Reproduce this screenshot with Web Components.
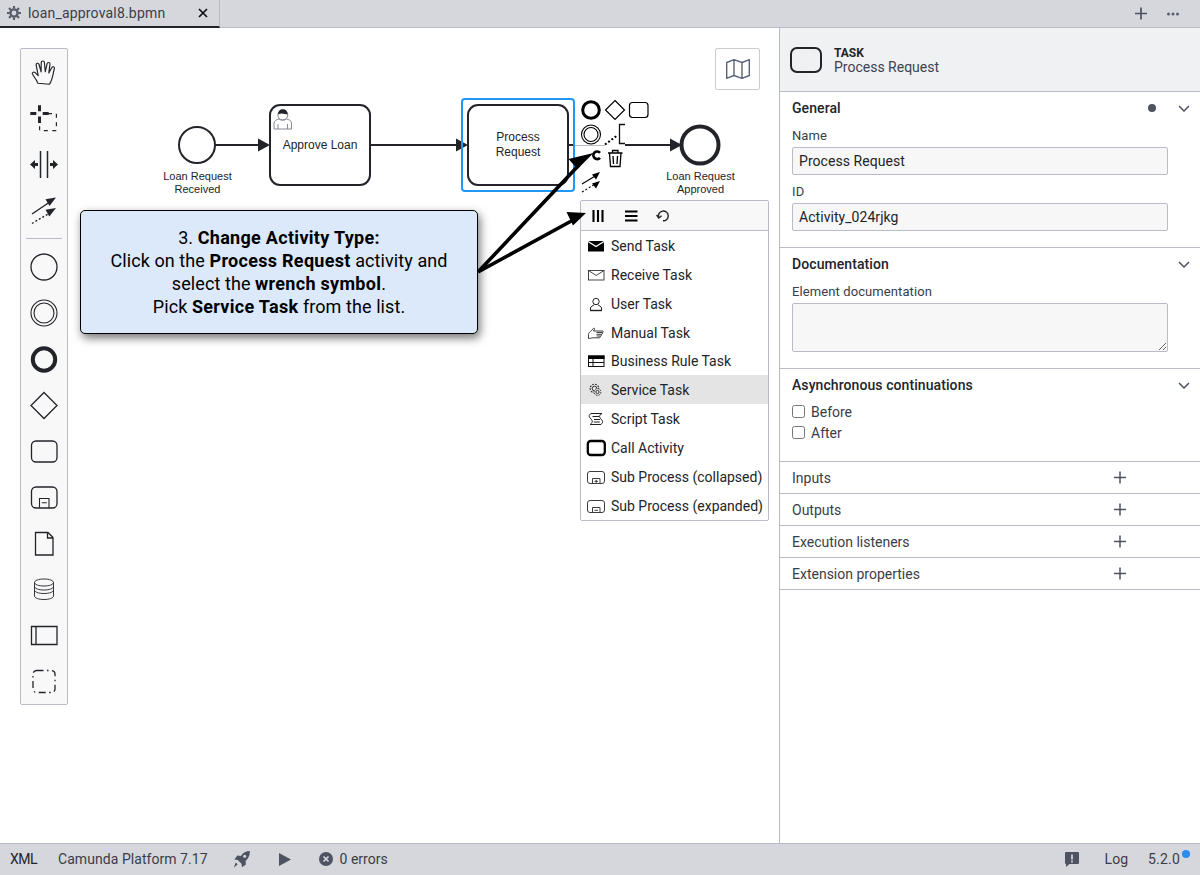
<!DOCTYPE html>
<html lang="en">
<head>
<meta charset="utf-8">
<title>loan_approval8.bpmn</title>
<style>
html,body{margin:0;padding:0;height:100%;overflow:hidden}
body{font-family:"Roboto","Liberation Sans",sans-serif;font-size:14px;color:#22242a;background:#fff}
</style>
</head>
<body>
<app-shell>
  <tab-bar slot="top"></tab-bar>
  <bpmn-canvas slot="main">
    <tool-palette></tool-palette>
    <map-toggle></map-toggle>
    <bpmn-diagram></bpmn-diagram>
    <call-out>
      3. <b>Change Activity Type:</b><br>
      Click on the <b>Process Request</b> activity and<br>
      select the <b>wrench symbol</b>.<br>
      Pick <b>Service Task</b> from the list.
    </call-out>
    <replace-menu>
      <menu-item icon="send">Send Task</menu-item>
      <menu-item icon="receive">Receive Task</menu-item>
      <menu-item icon="user">User Task</menu-item>
      <menu-item icon="manual">Manual Task</menu-item>
      <menu-item icon="rule" short>Business Rule Task</menu-item>
      <menu-item icon="service" active>Service Task</menu-item>
      <menu-item icon="script">Script Task</menu-item>
      <menu-item icon="call">Call Activity</menu-item>
      <menu-item icon="subc">Sub Process (collapsed)</menu-item>
      <menu-item icon="sube">Sub Process (expanded)</menu-item>
    </replace-menu>
    <pointer-arrows></pointer-arrows>
  </bpmn-canvas>
  <properties-panel slot="side">
    <panel-header type="TASK" name="Process Request"></panel-header>
    <prop-group title="General" dot>
      <prop-field label="Name" value="Process Request"></prop-field>
      <prop-field label="ID" value="Activity_024rjkg"></prop-field>
    </prop-group>
    <prop-group title="Documentation">
      <prop-field label="Element documentation" multiline></prop-field>
    </prop-group>
    <prop-group title="Asynchronous continuations" compact>
      <prop-check>Before</prop-check>
      <prop-check>After</prop-check>
    </prop-group>
    <add-row>Inputs</add-row>
    <add-row>Outputs</add-row>
    <add-row>Execution listeners</add-row>
    <add-row>Extension properties</add-row>
  </properties-panel>
  <status-bar slot="bottom"></status-bar>
</app-shell>

<script>
const INK = '#22242a', SLATE = '#4d5361';

function shadow(el, html){
  el.attachShadow({mode:'open'}).innerHTML = html;
}

class AppShell extends HTMLElement{
  constructor(){super();shadow(this,`<style>
    :host{display:flex;flex-direction:column;height:875px;width:1200px}
    .middle{flex:1;display:flex;min-height:0}
  </style>
  <slot name="top"></slot>
  <div class="middle"><slot name="main"></slot><slot name="side"></slot></div>
  <slot name="bottom"></slot>`);}
}

class TabBar extends HTMLElement{
  constructor(){super();shadow(this,`<style>
    :host{display:flex;height:28px;box-sizing:border-box;background:#d5d7dd;border-bottom:1px solid #b9bcc6;color:${INK};font-size:14px}
    .tab{width:220px;height:28px;box-sizing:border-box;display:flex;align-items:center;border-bottom:2px solid ${INK};border-right:1px solid #b9bcc6;padding-left:7px;letter-spacing:.18px;flex:none}
    .name{margin-left:7px;flex:1;color:#3a3d47}
    .close{width:10px;height:10px;margin-right:11px;flex:none}
    .gear{width:14px;height:14px;flex:none}
    .spacer{flex:1}
    .act{display:flex;align-items:center;height:27px;padding-right:21px;gap:20px}
    svg{display:block}
  </style>
  <div class="tab">
    <svg class="gear" viewBox="0 0 14 14"><g fill="none" stroke="#5a5e6b"><circle cx="7" cy="7" r="3.6" stroke-width="2.4"/><path stroke-width="2.1" d="M7 0v2.6M7 11.4V14M0 7h2.6M11.4 7H14M2 2l1.9 1.9M10.1 10.1 12 12M12 2l-1.9 1.9M3.9 10.1 2 12"/></g></svg>
    <span class="name">loan_approval8.bpmn</span>
    <svg class="close" viewBox="0 0 10 10"><path d="M1 1l8 8M9 1 1 9" stroke="#111" stroke-width="1.7"/></svg>
  </div>
  <div class="spacer"></div>
  <div class="act">
    <svg width="12" height="13" viewBox="0 0 12 13"><path d="M6 .5v12M0 6.500h12" stroke="#4d5361" stroke-width="1.7"/></svg>
    <svg width="12" height="4" viewBox="0 0 12 4"><g fill="#5a5e6b"><circle cx="1.500" cy="2" r="1.500"/><circle cx="6" cy="2" r="1.500"/><circle cx="10.500" cy="2" r="1.500"/></g></svg>
  </div>`);}
}

class BpmnCanvas extends HTMLElement{
  constructor(){super();shadow(this,`<style>
    :host{display:block;position:relative;flex:1;min-width:0;background:#fff;overflow:hidden}
  </style><slot></slot>`);}
}

/* palette icons: drawn in page coordinates, each 46x46 cell sets its own viewBox */
const S = `fill="none" stroke="${INK}" stroke-width="1.3"`;
const T = `fill="none" stroke="${INK}" stroke-width="1.1"`;
const TOOLS = [
 [49,`<g transform="translate(32 0) scale(1.07 1) translate(-32 0)"><path ${T} stroke-linejoin="round" d="M37.5 83.2c-1.4-3.6-3.4-6.4-5-8.9-1-1.7 1-3 2.4-1.6l2.9 3-1.9-10.6c-.4-2 2.2-2.6 2.7-.6l1.9 7.4.1-9.4c0-2.1 2.900-2.100 3 0l.8 9.3 1.7-8c.4-2 3-1.5 2.7.5l-1.1 8.700 2.700-5.300c.9-1.800 3-.9 2.500 1-1.400 5-1.500 10.700-4.600 15.500z"/></g>`],
 [95,`<path fill="none" stroke="${INK}" stroke-width="3" d="M30.300 113.500h6M42.700 113.500h6M39.500 105.200v6M39.500 116.500v6.500"/><path fill="none" stroke="${INK}" stroke-width="1.200" stroke-dasharray="4 4.500" d="M48 113.600h8.400v17H39.600v-6"/>`],
 [141,`<path fill="none" stroke="${INK}" stroke-width="1.500" d="M40.500 151v27M47.500 151v27"/><path fill="${INK}" d="M30 164.500l5-4.500v3h3v3h-3v3zM58 164.500l-5-4.500v3h-3v3h3v3z"/>`],
 [187,`<path fill="none" stroke="${INK}" stroke-width="1.400" d="M32 214l17-11.500"/><path fill="${INK}" d="M56 197.500l-10.500 1.800 4 6.700z"/><path fill="none" stroke="${INK}" stroke-width="1.400" stroke-dasharray="2 2" d="M32 223.500l17-10"/><path fill="${INK}" d="M56 208l-10.500 1.800 3.800 6.600z"/>`],
 [244,`<circle ${S} cx="44" cy="267" r="13"/>`],
 [290,`<circle ${T} cx="44" cy="313" r="13"/><circle ${T} cx="44" cy="313" r="10"/>`],
 [336,`<circle fill="none" stroke="${INK}" stroke-width="4" cx="44" cy="359.500" r="11.200"/>`],
 [382,`<path ${S} d="M44 392.500 57 405.500 44 418.500 31 405.500z"/>`],
 [428,`<rect ${S} x="31.500" y="441" width="25.500" height="21" rx="4.500"/>`],
 [474,`<rect ${S} x="31.500" y="487" width="25.500" height="21" rx="4.500"/><path ${T} d="M39.500 508v-9.500h9.500v9.500M41.800 502.700h5"/>`],
 [520,`<path ${S} d="M35.500 532.500v22.500h17.500v-17.500l-5-5zM47.500 532.500v5.500H53"/>`],
 [566,`<path fill="none" stroke="${INK}" stroke-width=".9" d="M34.500 582.500v13.500c0 2 4 3.500 9.500 3.500s9.500-1.500 9.500-3.500v-13.500M34.500 582.500c0-2 4-3.500 9.500-3.500s9.500 1.500 9.500 3.500-4 3.500-9.500 3.500-9.500-1.500-9.500-3.500zM34.500 586.500c0 2 4 3.500 9.500 3.500s9.500-1.500 9.500-3.500M34.500 590c0 2 4 3.500 9.500 3.500s9.500-1.500 9.500-3.500"/>`],
 [612,`<path ${S} d="M31.500 626.500h25.500v18h-25.500zM36 626.500v18"/>`],
 [658,`<rect fill="none" stroke="${INK}" stroke-width="1.300" stroke-dasharray="7 3.500 1.500 3.500" x="33" y="670.500" width="22" height="22" rx="3.500"/>`]
];
class ToolPalette extends HTMLElement{
  constructor(){super();
    const cell=([y,d])=>`<svg width="46" height="46" viewBox="21 ${y} 46 46">${d}</svg>`;
    shadow(this,`<style>
      :host{display:block;position:absolute;left:20px;top:20px;width:48px;box-sizing:border-box;background:#f8f8f8;border:1px solid #b9bcc6;border-radius:2px}
      svg{display:block}
      hr{border:0;height:1px;background:#b9bcc6;margin:5px 5px 5px 5px}
    </style>${TOOLS.slice(0,4).map(cell).join('')}<hr>${TOOLS.slice(4).map(cell).join('')}`);
  }
}

class MapToggle extends HTMLElement{
  constructor(){super();shadow(this,`<style>
    :host{display:flex;align-items:center;justify-content:center;position:absolute;left:715px;top:20px;width:45px;height:42px;box-sizing:border-box;background:#fff;border:1px solid #ccc;border-radius:2px}
  </style>
  <svg width="24" height="20" viewBox="0 0 24 20"><path fill="none" stroke="#5b6478" stroke-width="1.400" stroke-linejoin="round" d="M.7 3.500 8 .7l8 2.800 7.300-2.800v15.800L16 19.300l-8-2.800-7.300 2.800zM8 .7v15.800M16 3.500v15.800"/></svg>`);}
}

class BpmnDiagram extends HTMLElement{
  constructor(){super();
    const head=(x,y)=>`<path fill="${INK}" d="M${x} ${y}l-12-6.500v13z"/>`;
    shadow(this,`<style>
      :host{display:block;position:absolute;left:0;top:0}
      svg{display:block}
      text{font-family:"Liberation Sans",Arial,sans-serif;fill:${INK};text-anchor:middle}
      .l{font-size:11px}.t{font-size:12px}
    </style>
    <svg width="779" height="815" viewBox="0 28 779 815">
      <g fill="none" stroke="${INK}" stroke-width="2">
        <path d="M215 145h44M370 145h88M568 145h7M625 145h46"/>
        <circle cx="197" cy="145" r="18" fill="#fff"/>
        <rect x="270" y="105" width="100" height="80" rx="10" fill="#fff"/>
        <rect x="468" y="105" width="100" height="80" rx="10" fill="#fff"/>
        <circle cx="700" cy="145" r="18.500" stroke-width="4" fill="#fff"/>
      </g>
      <path d="M575 145.500h30" stroke="#b9bcc6" stroke-width="1"/>
      ${head(270,145)}${head(468,145)}${head(682,145)}
      <rect x="462" y="99" width="112" height="92" rx="3" fill="none" stroke="#2196f3" stroke-width="2"/>
      <g fill="none" stroke="#7b7e88" stroke-width=".9">
        <circle cx="282.800" cy="115" r="5" fill="#fff"/>
        <path d="M274 129v-6c0-2.500 3-3.500 5-4 1 1.500 6 1.500 7.500 0 2 .5 5 1.500 5 4v6zM278 124v5M287.500 124v5"/>
      </g>
      <path d="M278 114.500c0-3.500 2-5.200 4.800-5.200s4.800 1.700 4.800 5.200c-2 0-5.600-2-9.600 0z" fill="${INK}"/>
      <text class="t" x="320" y="149">Approve Loan</text>
      <text class="t" x="518" y="141">Process</text>
      <text class="t" x="518" y="156">Request</text>
      <text class="l" x="197.500" y="180">Loan Request</text>
      <text class="l" x="197.500" y="193">Received</text>
      <text class="l" x="700.500" y="180">Loan Request</text>
      <text class="l" x="700.500" y="193">Approved</text>
      <!-- context pad -->
      <g fill="none" stroke="#000">
        <circle cx="591" cy="110" r="8.300" stroke-width="3"/>
        <path d="M615 100.500 624.500 110 615 119.500 605.500 110z" stroke-width="1.200"/>
        <rect x="629.500" y="102.500" width="18.500" height="15" rx="3" stroke-width="1.200"/>
        <circle cx="591" cy="134.500" r="9.500" stroke-width="1.100"/>
        <circle cx="591" cy="134.500" r="7" stroke-width="1.100"/>
        <path d="M605 144.500l13-9.500" stroke-width="2" stroke-dasharray="2 2"/>
        <path d="M625 124.500h-5.500v19h5.500" stroke="#111" stroke-width="1.300"/>
        <path d="M582 184l14-8.500" stroke-width="1.100"/>
        <path d="M582 192l14-8.500" stroke-width="1.100" stroke-dasharray="2 2"/>
      </g>
      <path fill="#000" d="M600 172l-8 2.500 4 5zM600 181l-8 2.500 4 5z"/>
      <path d="M600 152.800a3.800 3.800 0 1 0 0 5" fill="none" stroke="#000" stroke-width="2.600"/>
      <g fill="none" stroke="#000" stroke-width="1.300">
        <path d="M608 153h14.500M612.500 153v-2.500h5.500v2.500M609.500 153l1 13.500h9.500l1-13.500"/>
        <path d="M613 156l.5 8M617.500 156l-.5 8"/>
      </g>
    </svg>`);
  }
}

class CallOut extends HTMLElement{
  constructor(){super();shadow(this,`<style>
    :host{display:block;position:absolute;left:80px;top:182px;width:398px;height:124px;box-sizing:border-box;padding:15px 0 0;background:#dbe9fb;border:1px solid #000;border-radius:5px;box-shadow:2px 4px 10px rgba(0,0,0,.55);text-align:center;font-size:18px;line-height:23px;color:#000;letter-spacing:.08px}
    ::slotted(b){letter-spacing:.3px}
  </style><slot></slot>`);}
}

class ReplaceMenu extends HTMLElement{
  constructor(){super();shadow(this,`<style>
    :host{display:block;position:absolute;left:580px;top:172px;width:189px;box-sizing:border-box;background:#fff;border:1px solid #b9bcc6;border-radius:2px;font-size:14px}
    .hd{height:30px;box-sizing:border-box;display:flex;align-items:center;background:#f8f8f8;border-bottom:1px solid #b9bcc6;padding-left:11px;gap:18px}
    svg{display:block;flex:none}
  </style>
  <div class="hd">
    <svg width="14" height="12" viewBox="0 0 14 12"><path d="M1.500 0v12M6 0v12M10.500 0v12" stroke="#000" stroke-width="2.100"/></svg>
    <svg width="14" height="12" viewBox="0 0 14 12"><path d="M1 1.500h12.500M1 6h12.500M1 10.500h12.500" stroke="#000" stroke-width="2.100"/></svg>
    <svg width="14" height="13" viewBox="0 0 14 13"><path fill="none" stroke="#222" stroke-width="1.400" d="M7 11.800A4.900 4.900 0 1 0 2.700 8.500"/><path fill="none" stroke="#222" stroke-width="1.400" d="M.6 6 2.800 9 5.600 6.800"/></svg>
  </div>
  <div class="list"><slot></slot></div>`);}
}

const MI = {
 send:`<rect x="2" y="5" width="16" height="10.500" rx=".5" fill="#000"/><path d="M2 5.500 10 10.500 18 5.500" fill="none" stroke="#fff" stroke-width="1.300"/>`,
 receive:`<rect x="2.500" y="5.500" width="15.500" height="9.500" fill="none" stroke="#333" stroke-width=".9"/><path d="M2.500 5.500 10.200 10.500 18 5.500" fill="none" stroke="#333" stroke-width=".9"/>`,
 user:`<g fill="none" stroke="#222" stroke-width="1"><circle cx="10" cy="7.500" r="3.200"/><path d="M4.500 16.500v-2.500c0-1.800 2.500-2 3.700-3.300M15.500 16.500v-2.500c0-1.800-2.500-2-3.700-3.300"/></g><path d="M4 16.500h12" stroke="#222" stroke-width="1.400"/>`,
 manual:`<path fill="none" stroke="#333" stroke-width=".95" stroke-linejoin="round" d="M2.500 15.500v-4c0-1.500 1.500-3 3-4l2-2.200c.5-.5 1.500 0 1 1L7.500 8h9c1 0 1 1.500 0 1.500h-6M16 9.500c.8.300.6 1.700-.2 1.800h-5.300M15 11.300c.7.300.5 1.700-.3 1.700h-4M14 13c.5.500.3 1.800-.5 1.800H7c-1.500 0-2.500.7-4.500.7"/>`,
 rule:`<rect x="2.500" y="5" width="15.500" height="10.500" fill="none" stroke="#111" stroke-width="1"/><rect x="2" y="4.500" width="16.500" height="3.500" fill="#000"/><path d="M2.500 11.500h15.500M7 8v7.500" stroke="#111" stroke-width="1" fill="none"/>`,
 service:`<g fill="none" stroke="#333" stroke-width="1"><circle cx="8.500" cy="8.500" r="4.300" stroke-dasharray="1.800 1.100" stroke-width="1.200"/><circle cx="8.500" cy="8.500" r="2.300"/><circle cx="11.500" cy="12" r="3.400" fill="#e4e4e4" stroke-dasharray="1.600 1"/><circle cx="11.500" cy="12" r="1.600"/></g>`,
 script:`<path fill="none" stroke="#222" stroke-width="1" d="M5 4.500h11c-3 1.500-3 3.500-1 5.500 2 2 2 3.500 0 5.500H4c2.500-1.500 3-3.500 1-5.500-2.500-2.500-2.500-4 0-5.500zM6.500 7.500h6.500M8 10.500h6M7.800 13h6"/>`,
 call:`<rect x="1.800" y="3" width="17" height="14" rx="3" fill="none" stroke="#000" stroke-width="2.300"/>`,
 subc:`<rect x="1.500" y="4.500" width="17" height="12" rx="2.500" fill="none" stroke="#333" stroke-width=".95"/><path d="M6.500 16.500v-5h7.500v5M10.200 12.800v3M8.500 14.300h3.500" fill="none" stroke="#333" stroke-width=".95"/>`,
 sube:`<rect x="1.500" y="4.500" width="17" height="12" rx="2.500" fill="none" stroke="#333" stroke-width=".95"/><path d="M6.500 16.500v-5h7.500v5M8.500 14.300h3.500" fill="none" stroke="#333" stroke-width=".95"/>`
};
class MenuItem extends HTMLElement{
  constructor(){super();
    const active=this.hasAttribute('active'), short=this.hasAttribute('short');
    shadow(this,`<style>
      :host{display:flex;align-items:center;height:${short?28:29}px;box-sizing:border-box;padding:${short?0:1}px 0 0 5px;gap:5px;background:${active?'#e4e4e4':'transparent'};color:#22242a;white-space:nowrap}
      svg{display:block;flex:none}
    </style><svg width="20" height="20" viewBox="0 0 20 20">${MI[this.getAttribute('icon')]}</svg><span><slot></slot></span>`);
  }
}

class PointerArrows extends HTMLElement{
  constructor(){super();shadow(this,`<style>
    :host{display:block;position:absolute;left:0;top:0;pointer-events:none}
    svg{display:block}
  </style>
  <svg width="779" height="815" viewBox="0 28 779 815">
    <path d="M478 272 579 165M478 272 575 219" stroke="#000" stroke-width="3.600" fill="none"/>
    <path d="M593.500 153 568.500 159 577.500 169zM586 213 566.500 212 573 225.500z" fill="#000"/>
  </svg>`);}
}

class PropertiesPanel extends HTMLElement{
  constructor(){super();shadow(this,`<style>
    :host{display:block;width:421px;flex:none;box-sizing:border-box;background:#fff;border-left:1px solid #b9bcc6;color:#22242a}
  </style><slot></slot>`);}
}

class PanelHeader extends HTMLElement{
  constructor(){super();
    shadow(this,`<style>
      :host{display:flex;align-items:center;height:64px;box-sizing:border-box;background:#f0f1f3;border-bottom:1px solid #b9bcc6;padding:1px 0 0 10px;gap:12px}
      svg{display:block;flex:none}
      .w{padding-top:2px}
      .t{font-size:12px;font-weight:700;line-height:13px;color:#22242a}
      .n{font-size:14px;line-height:15px;color:#3e4250;letter-spacing:0}
    </style>
    <svg width="32" height="26" viewBox="0 0 32 26"><rect x="1" y="1" width="30" height="24" rx="6" fill="none" stroke="${INK}" stroke-width="2"/></svg>
    <div class="w"><div class="t">${this.getAttribute('type')}</div><div class="n">${this.getAttribute('name')}</div></div>`);
  }
}

class PropGroup extends HTMLElement{
  constructor(){super();
    const dot=this.hasAttribute('dot'), compact=this.hasAttribute('compact');
    shadow(this,`<style>
      :host{display:block;border-bottom:1px solid #b9bcc6;padding:0 0 ${compact?'18px':'16px'} 12px}
      .h{display:flex;align-items:center;height:32px;font-weight:500;font-size:14px;color:#22242a;padding-right:10px;letter-spacing:.08px}
      .h span{flex:1}
      .dot{width:8px;height:8px;border-radius:50%;background:#4d5361;margin-right:22px;flex:none}
      svg{display:block;flex:none}
      .b{display:block}
    </style>
    <div class="h"><span>${this.getAttribute('title')}</span>${dot?'<i class="dot"></i>':''}<svg width="12" height="7" viewBox="0 0 12 7"><path d="M1 1l5 5 5-5" fill="none" stroke="#4d5361" stroke-width="1.500"/></svg></div>
    <div class="b"><slot></slot></div>`);
  }
}

class PropField extends HTMLElement{
  constructor(){super();
    const ml=this.hasAttribute('multiline');
    shadow(this,`<style>
      :host{display:block;width:376px}
      :host(:not(:first-child)){margin-top:5px}
      label{display:flex;align-items:center;height:23px;font-size:13px;color:#3a3d47;padding-bottom:1px;box-sizing:border-box;letter-spacing:.1px}
      .i{display:block;width:376px;height:${ml?49:28}px;box-sizing:border-box;margin:0;padding:0 6px;background:#f7f7f8;border:1px solid #b9bcc6;border-radius:2px;font:14px/26px "Roboto","Liberation Sans",sans-serif;color:#22242a;letter-spacing:.05px;outline:0}
      textarea.i{resize:both;padding:4px 6px}
    </style>
    <label>${this.getAttribute('label')}</label>
    ${ml?'<textarea class="i"></textarea>':`<input class="i" value="${this.getAttribute('value')}">`}`);
  }
}

class PropCheck extends HTMLElement{
  constructor(){super();shadow(this,`<style>
    :host{display:flex;align-items:center;height:21px;gap:6px;font-size:14px;color:#3a3d47}
    i{display:block;width:13px;height:13px;box-sizing:border-box;background:#fff;border:1px solid #767676;border-radius:2.500px;flex:none}
  </style><i role="checkbox" aria-checked="false"></i><span><slot></slot></span>`);}
}

class AddRow extends HTMLElement{
  constructor(){super();shadow(this,`<style>
    :host{display:flex;align-items:center;height:32px;box-sizing:border-box;border-bottom:1px solid #b9bcc6;padding:0 0 0 12px;font-size:14px;color:#3a3d47}
    span{width:322px}
    svg{display:block}
  </style><span><slot></slot></span><svg width="12" height="13" viewBox="0 0 12 13"><path d="M6 .5v12M0 6.500h12" stroke="#4d5361" stroke-width="1.500"/></svg>`);}
}

class StatusBar extends HTMLElement{
  constructor(){super();shadow(this,`<style>
    :host{display:flex;align-items:center;height:32px;box-sizing:border-box;background:#d5d7dd;border-top:1px solid #b9bcc6;font-size:14px;color:#3a3d47;padding:0 0 1px 10px}
    svg{display:block;flex:none}
    .x{color:#22242a;letter-spacing:-.5px}
    .camunda{margin-left:21px;letter-spacing:.05px}
    .rocket{margin-left:24px}
    .play{margin-left:29px}
    .err{margin-left:28px}
    .errt{margin-left:7px}
    .sp{flex:1}
    .log{margin-left:26px}
    .ver{margin-left:20px;margin-right:20px;position:relative;letter-spacing:.2px}
    .ver i{position:absolute;right:-10px;top:-1px;width:8px;height:8px;border-radius:50%;background:#2b8cf0}
  </style>
  <span class="x">XML</span>
  <span class="camunda">Camunda Platform 7.17</span>
  <svg class="rocket" width="18" height="17" viewBox="0 0 18 17"><path fill="#4d5361" d="M17.800 0c.3 3.900-1 7.300-4.300 10l.4 3.500-3.900 2.700-.5-3.500-3.700-3.700-3.400-.5L5.300 4.600l3.500.3C11 1.700 14 .1 17.800 0zM3.700 11.500l2 2-3.800 2.900z"/><circle cx="12.700" cy="5.200" r="1.500" fill="#d5d7dd"/></svg>
  <svg class="play" width="12" height="13" viewBox="0 0 12 13"><path fill="#4d5361" d="M0 0l12 6.500L0 13z"/></svg>
  <svg class="err" width="14" height="14" viewBox="0 0 14 14"><circle cx="7" cy="7" r="7" fill="#4d5361"/><path d="M4.500 4.500l5 5M9.500 4.500l-5 5" stroke="#d5d7dd" stroke-width="1.700"/></svg>
  <span class="errt">0 errors</span>
  <span class="sp"></span>
  <svg width="14" height="15" viewBox="0 0 14 15"><path fill="#4d5361" d="M1 0h12a1 1 0 0 1 1 1v10a1 1 0 0 1-1 1H4.500L1 15v-3a1 1 0 0 1-1-1V1a1 1 0 0 1 1-1z"/><path d="M7 2.500v5M7 8.500v2" stroke="#d5d7dd" stroke-width="1.700"/></svg>
  <span class="log">Log</span>
  <span class="ver">5.2.0<i></i></span>`);}
}

const defs={'app-shell':AppShell,'tab-bar':TabBar,'bpmn-canvas':BpmnCanvas,'tool-palette':ToolPalette,'map-toggle':MapToggle,'bpmn-diagram':BpmnDiagram,'call-out':CallOut,'replace-menu':ReplaceMenu,'menu-item':MenuItem,'pointer-arrows':PointerArrows,'properties-panel':PropertiesPanel,'panel-header':PanelHeader,'prop-group':PropGroup,'prop-field':PropField,'prop-check':PropCheck,'add-row':AddRow,'status-bar':StatusBar};
for(const k in defs)customElements.define(k,defs[k]);
</script>
</body>
</html>
